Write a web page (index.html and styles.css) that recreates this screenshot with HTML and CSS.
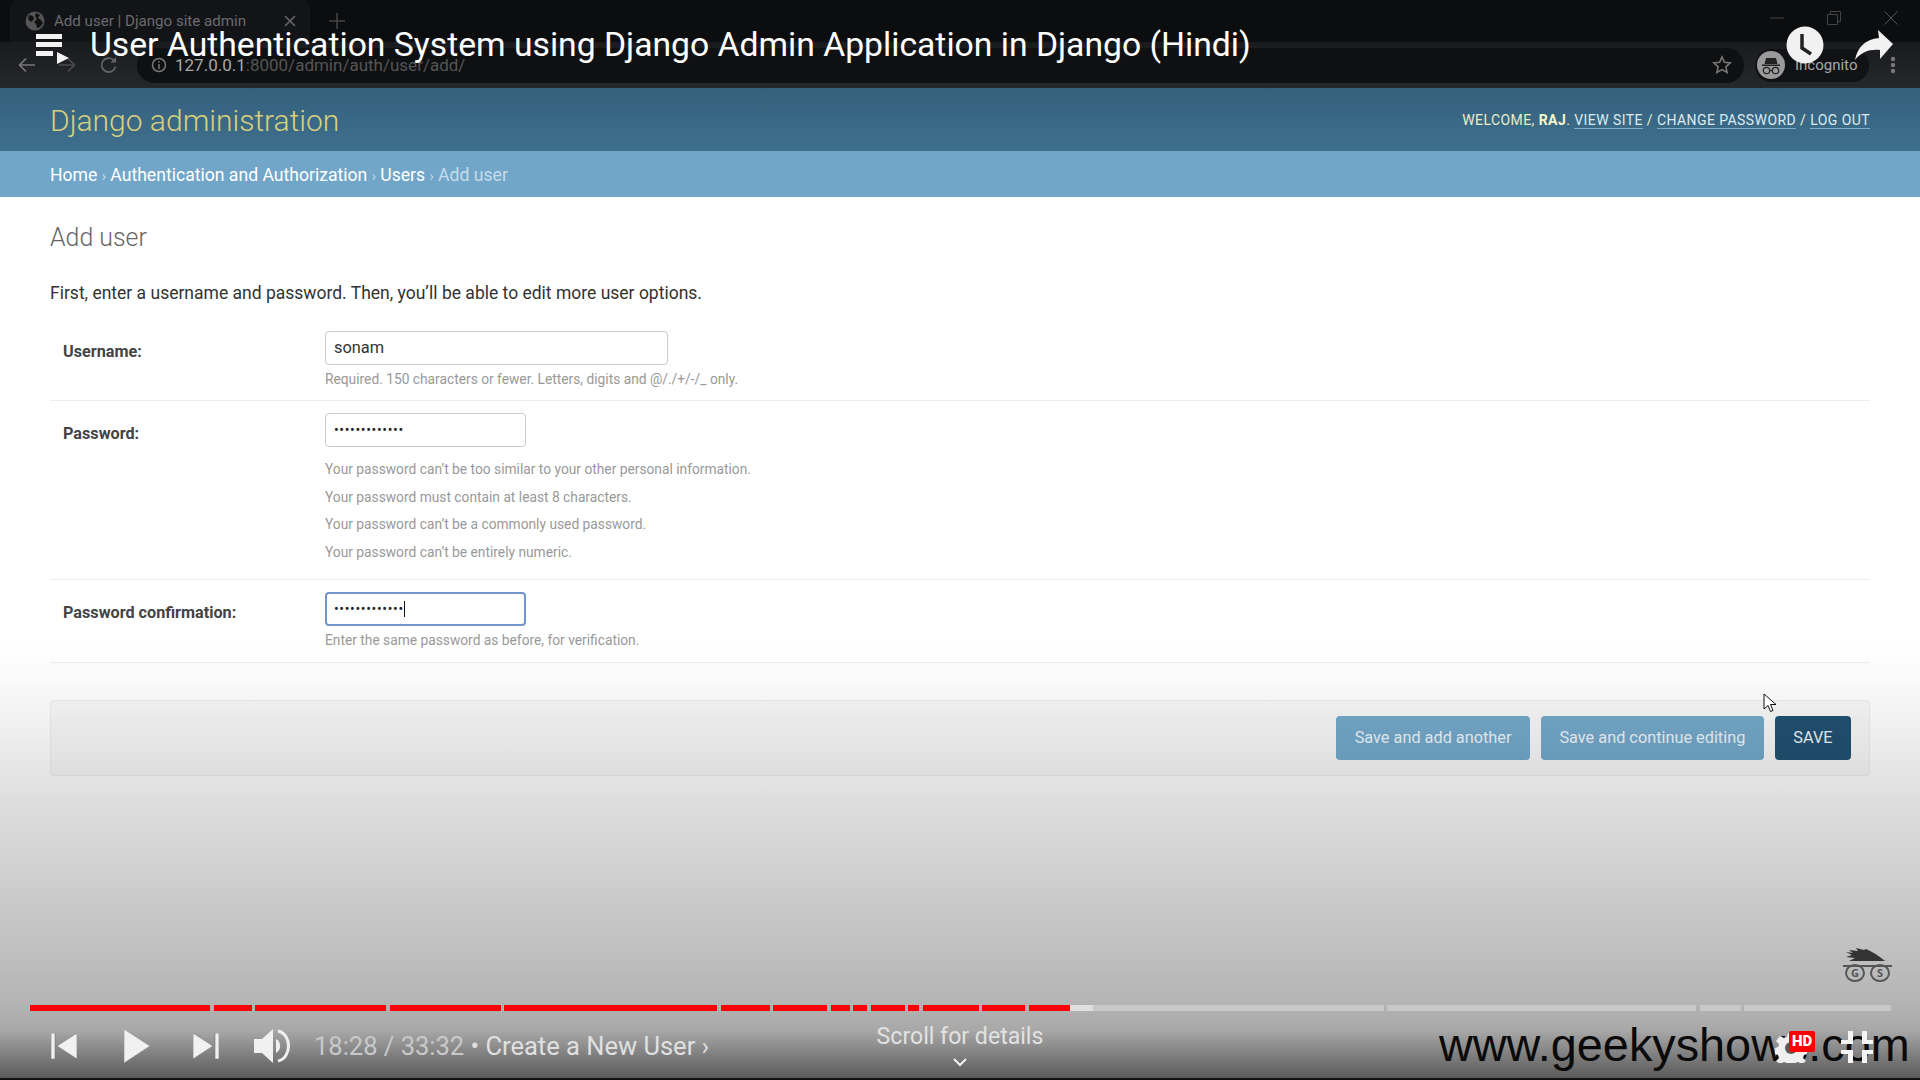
FILE: index.html
```html
<!DOCTYPE html><html>
<head>
<title>Add user | Django site admin</title>
<link rel="stylesheet" href="styles.css">
</head>
<body>
<div class='stage'>

<div class='tabstrip'>
  <div class='tab'>
    <svg class='globe' width='20' height='20' viewBox='0 0 20 20'><circle cx='10' cy='10' r='9.5' fill='#555'/><path d='M4 4l4 1 1 3-3 3-3-3zM11 2l4 2-2 3 3 2 2 3-3 4-3 1-1-4-2-2 3-3-2-3z' fill='#111'/></svg>
    <span class='tab-title'>Add user | Django site admin</span>
    <svg class='tab-close' width='12' height='12' viewBox='0 0 12 12'><path d='M1 1l10 10M11 1L1 11' stroke='#666' stroke-width='1.6'/></svg>
  </div>
  <svg class='tab-new' width='16' height='16' viewBox='0 0 16 16'><path d='M8 0v16M0 8h16' stroke='#444' stroke-width='1.6'/></svg>
  <div class='window-btns'>
    <svg width='14' height='14' viewBox='0 0 14 14'><path d='M0 7h14' stroke='#444' stroke-width='1'/></svg>
    <svg width='14' height='14' viewBox='0 0 14 14'><path d='M.5 3.500h10v10H.5zM3.500 3V.5h10v10H11' fill='none' stroke='#444'/></svg>
    <svg width='14' height='14' viewBox='0 0 14 14'><path d='M.5.5l13 13M13.500.5l-13 13' stroke='#555'/></svg>
  </div>
</div>

<div class='toolbar'>
  <svg class='nav-icon' width='18' height='16' viewBox='0 0 18 16'><path d='M17 8H2M8 1.500L1.500 8 8 14.500' fill='none' stroke='#777' stroke-width='1.700'/></svg>
  <svg class='nav-icon' width='18' height='16' viewBox='0 0 18 16'><path d='M1 8h15M10 1.500L16.500 8 10 14.500' fill='none' stroke='#4c4c4c' stroke-width='1.700'/></svg>
  <svg class='nav-icon' width='18' height='18' viewBox='0 0 18 18'><path d='M15.500 10.500A7 7 0 1 1 14 4.500' fill='none' stroke='#666' stroke-width='1.700'/><path d='M16 1v5.500h-5.500z' fill='#666'/></svg>
  <div class='omnibox'>
    <svg width='16' height='16' viewBox='0 0 16 16'><circle cx='8' cy='8' r='6.500' fill='none' stroke='#777' stroke-width='1.500'/><path d='M8 7v5M8 4v1.500' stroke='#777' stroke-width='1.500'/></svg>
    <span class='url'><span class='url-host'>127.0.0.1</span>:8000/admin/auth/user/add/</span>
    <svg class='star' width='20' height='20' viewBox='0 0 20 20'><path d='M10 2l2.400 5.300 5.800.6-4.300 3.900 1.200 5.700-5.100-2.900-5.100 2.900 1.200-5.700L1.800 7.900l5.800-.6z' fill='none' stroke='#777' stroke-width='1.600'/></svg>
  </div>
  <div class='incognito'>
    <svg width='28' height='28' viewBox='0 0 28 28'><circle cx='14' cy='14' r='14' fill='#9a9a9a'/><path d='M9 7h10l1.500 6h-13zM5 13.500h18V15H5z' fill='#222'/><circle cx='9.500' cy='19.500' r='3.200' fill='none' stroke='#222' stroke-width='1.200'/><circle cx='18.500' cy='19.500' r='3.200' fill='none' stroke='#222' stroke-width='1.200'/><path d='M12.500 19.500h3' stroke='#222' stroke-width='1.200'/></svg>
    <span class='incognito-label'>Incognito</span>
  </div>
  <svg class='kebab' width='6' height='18' viewBox='0 0 6 18'><circle cx='3' cy='3' r='2.200' fill='#777'/><circle cx='3' cy='9' r='2.200' fill='#777'/><circle cx='3' cy='15' r='2.200' fill='#777'/></svg>
</div>

<div class='header'>
  <div class='branding'>Django administration</div>
  <div class='usertools'>WELCOME, <strong>RAJ</strong>. <a>VIEW SITE</a> / <a>CHANGE PASSWORD</a> / <a>LOG OUT</a></div>
</div>

<div class='breadcrumbs'><a>Home</a> <span class='sep'>›</span> <a>Authentication and Authorization</a> <span class='sep'>›</span> <a>Users</a> <span class='sep'>›</span> Add user</div>

<div class='content'>
  <h1>Add user</h1>
  <p class='intro'>First, enter a username and password. Then, you’ll be able to edit more user options.</p>

  <div class='form-row row-user'>
    <label>Username:</label>
    <div class='field-box'>
      <div class='field field-wide'>sonam</div>
      <div class='help'>Required. 150 characters or fewer. Letters, digits and @/./+/-/_ only.</div>
    </div>
  </div>

  <div class='form-row row-pass'>
    <label>Password:</label>
    <div class='field-box'>
      <div class='field dots'>•••••••••••••</div>
      <ul class='help-list'>
        <li>Your password can’t be too similar to your other personal information.</li>
        <li>Your password must contain at least 8 characters.</li>
        <li>Your password can’t be a commonly used password.</li>
        <li>Your password can’t be entirely numeric.</li>
      </ul>
    </div>
  </div>

  <div class='form-row row-confirm'>
    <label>Password confirmation:</label>
    <div class='field-box'>
      <div class='field dots focused'><span class='caret'>•••••••••••••</span></div>
      <div class='help'>Enter the same password as before, for verification.</div>
    </div>
  </div>

  <div class='submit-row'>
    <a class='btn'>Save and add another</a>
    <a class='btn'>Save and continue editing</a>
    <a class='btn btn-default'>SAVE</a>
  </div>
</div>

<!-- video player laid over the recording -->
<div class='shade'></div>

<svg class='cursor' width='14' height='20' viewBox='0 0 14 20'><path d='M1 1v15l4-3.500 2.500 6 2.500-1-2.500-6H13z' fill='#fff' stroke='#111' stroke-width='1'/></svg>

<div class='player-top'>
  <svg width='34' height='36' viewBox='0 0 34 36'><path d='M0 4h26v5H0zM0 12h26v5H0zM0 21h17v5H0z' fill='#f2f2f2'/><path d='M21 22l12 6-12 6z' fill='#f2f2f2'/></svg>
  <div class='video-title'>User Authentication System using Django Admin Application in Django (Hindi)</div>
</div>

<svg class='clock' width='38' height='38' viewBox='0 0 38 38'><circle cx='19' cy='19' r='18.500' fill='#f1f1f1'/><path d='M16 8v14l9 6' fill='none' stroke='#222' stroke-width='3.500'/></svg>
<svg class='share' width='38' height='30' viewBox='0 0 38 30'><path d='M23 0l15 14-13 15V20C15 19 6 22 0 30 2 18 10 9 24 8z' fill='#f2f2f2'/></svg>
<svg class='logo' width='50' height='36' viewBox='0 0 50 36'><path d='M3 4l7 1-4-3 9 1-2-3 8 2 2-1c7 3 13 7 19 12H6l6-3-9-1 6-2z' fill='#333'/><path d='M0 18h49' stroke='#555' stroke-width='2'/><ellipse cx='12' cy='25' rx='9' ry='8' fill='none' stroke='#555' stroke-width='2'/><ellipse cx='37' cy='25' rx='9' ry='8' fill='none' stroke='#555' stroke-width='2'/><text x='12' y='29' class='logo-text'>G</text><text x='37' y='29' class='logo-text'>S</text></svg>

<div class='progress'>
  <i class='seg played' style='width:180px'></i><i class='seg played' style='width:38px'></i><i class='seg played' style='width:131px'></i><i class='seg played' style='width:111px'></i><i class='seg played' style='width:213px'></i><i class='seg played' style='width:49px'></i><i class='seg played' style='width:54px'></i><i class='seg played' style='width:19px'></i><i class='seg played' style='width:14px'></i><i class='seg played' style='width:34px'></i><i class='seg played' style='width:11px'></i><i class='seg played' style='width:56px'></i><i class='seg played' style='width:43px'></i><i class='seg played-end' style='width:355px'></i><i class='seg' style='width:309px'></i><i class='seg' style='width:41px'></i><i class='seg' style='width:147px'></i>
</div>

<div class='controls'>
  <svg width='26' height='26' viewBox='0 0 26 26'><path d='M0 0h4v26H0zM26 0v26L6 13z' fill='#f1f1f1' stroke='#777' stroke-width='.6'/></svg>
  <svg width='26' height='34' viewBox='0 0 26 34'><path d='M0 0l26 17L0 34z' fill='#f1f1f1' stroke='#888' stroke-width='.6'/></svg>
  <svg width='26' height='26' viewBox='0 0 26 26'><path d='M0 0l20 13L0 26zM22 0h4v26h-4z' fill='#f1f1f1' stroke='#777' stroke-width='.6'/></svg>
  <svg width='37' height='36' viewBox='0 0 37 36'><path d='M0 11h8l11-10v34L8 25H0z' fill='#f1f1f1'/><path d='M22 11a8 8 0 0 1 0 14z' fill='#f1f1f1'/><path d='M24 3c14 3 14 27 0 30' fill='none' stroke='#f1f1f1' stroke-width='3'/></svg>
  <div class='time'>18:28 / 33:32 <span class='chapter'>• Create a New User ›</span></div>
</div>

<div class='scroll-hint'>
  <span>Scroll for details</span>
  <svg width='14' height='9' viewBox='0 0 14 9'><path d='M1 1l6 6 6-6' fill='none' stroke='#f1f1f1' stroke-width='2'/></svg>
</div>

<div class='watermark'>www.geekyshows.com</div>

<svg class='gear' width='32' height='30' viewBox='0 0 32 30'><path d='M13 0h6l1 4 3 1 4-2 4 5-3 3 1 3 3 1v6l-3 1-1 3 3 3-4 3-4-2-3 1-1 3h-6l-1-3-3-1-4 2-4-3 3-3-1-3-3-1v-6l3-1 1-3-3-3 4-5 4 2 3-1z' fill='#efefef'/><circle cx='16' cy='15' r='6' fill='#5a5a5a'/></svg>
<div class='hd'>HD</div>
<svg class='fullscreen' width='32' height='32' viewBox='0 0 32 32'><path d='M7 0h5v13H0V9h7zM21 0h5v9h6v4H21zM0 19h12v13H7V23H0zM21 19h11v4h-6v9h-5z' fill='#f4f4f4'/></svg>

<div class='bottom-edge'></div>
</div>
</body>
</html>
```

FILE: styles.css
```css
html, body { margin: 0; padding: 0; background: #000; }
body { font-family: Roboto, "Liberation Sans", sans-serif; }

.stage { position: relative; width: 1920px; height: 1080px; overflow: hidden; background: #fff; }

/* browser chrome */
.tabstrip { height: 42px; display: flex; align-items: flex-end; background: #0c0d0f; }
.tab { width: 300px; height: 42px; margin-left: 10px; display: flex; align-items: center; box-sizing: border-box; padding: 0 14px 0 15px; background: #131417; border-radius: 8px 8px 0 0; }
.tab-title { margin-left: 9px; font-size: 15.100px; color: #6b6b6b; white-space: nowrap; }
.tab-close { margin-left: auto; }
.tab-new { margin: 0 0 13px 19px; }
.window-btns { margin-left: auto; display: flex; gap: 43px; padding: 0 22px 17px 0; }

.toolbar { height: 46px; display: flex; align-items: center; box-sizing: border-box; padding: 0 0 0 18px; background: linear-gradient(#1a1b1e, #26272b); }
.nav-icon { margin-right: 22px; }
.toolbar .nav-icon:nth-child(3) { margin: 0 19px 0 2px; }
.omnibox { width: 1607px; height: 35px; display: flex; align-items: center; box-sizing: border-box; padding: 0 12px 0 14px; background: #0f1012; border-radius: 18px; }
.url { margin-left: 8px; font-size: 17px; color: #555; }
.url-host { color: #a8a8a8; }
.star { margin-left: auto; }
.incognito { width: 114px; height: 33px; margin-left: 11px; display: flex; align-items: center; box-sizing: border-box; padding-left: 2px; background: #111215; border-radius: 17px; }
.incognito-label { margin-left: 10px; font-size: 15px; color: #a8a8a8; }
.kebab { margin-left: 21px; }

/* django admin */
.header { height: 63px; display: flex; align-items: center; justify-content: space-between; box-sizing: border-box; padding: 0 50px; background: linear-gradient(#35617c, #3e6f8d); }
.branding { padding-top: 2px; font-size: 30px; font-weight: 300; color: #d8cf7e; }
.usertools { font-size: 14px; color: #e8ecc8; letter-spacing: .43px; }
.usertools strong { font-weight: 700; color: #f5f5cc; }
.usertools a { color: #dcebf2; border-bottom: 1px solid #79aec8; }

.breadcrumbs { height: 46px; line-height: 48px; box-sizing: border-box; padding: 0 50px; background: #72a6c8; font-size: 17.600px; color: #c4dcec; }
.breadcrumbs a { color: #fff; }
.breadcrumbs .sep { font-size: 14px; }

.content { padding: 0 50px; color: #333; }
.content h1 { margin: 0; padding-top: 27px; font-size: 24.900px; line-height: 28px; font-weight: 300; color: #666; }
.intro { margin: 29px 0 0; font-size: 17.500px; line-height: 24px; color: #333; }

.form-row { display: flex; border-bottom: 1px solid #eee; }
.form-row label { width: 275px; box-sizing: border-box; padding: 11px 0 0 13px; font-size: 16.200px; line-height: 20px; font-weight: 700; color: #444; }
.row-user { margin-top: 26px; height: 69px; }
.row-pass { height: 166px; padding-top: 12px; }
.row-confirm { height: 70px; padding-top: 12px; }

.field { width: 201px; height: 34px; box-sizing: border-box; padding: 0 8px; border: 1px solid #ccc; border-radius: 4px; background: #fff; font-size: 16.400px; line-height: 32px; color: #333; }
.field-wide { width: 343px; }
.dots { font-size: 14px; letter-spacing: .65px; color: #222; }
.focused { border: 2px solid #7396c9; padding: 0 7px; line-height: 30px; }
.caret { border-right: 1.500px solid #111; }

.help { margin-top: 6px; font-size: 13.780px; line-height: 16px; color: #999; }
.help-list { margin: 9px 0 0; padding: 0; list-style: none; }
.help-list li { height: 27.600px; font-size: 13.780px; line-height: 27.600px; color: #999; }

.submit-row { margin-top: 37px; height: 76px; display: flex; align-items: center; justify-content: flex-end; gap: 11px; box-sizing: border-box; padding-right: 18px; border: 1px solid #eee; border-radius: 4px; background: #f8f8f8; }
.btn { height: 44px; line-height: 44px; padding: 0 18.500px; border-radius: 4px; background: #74a9cb; font-size: 16.300px; color: #eef5fa; white-space: nowrap; }
.btn-default { background: #215172; }

/* video player overlay */
.shade { position: absolute; left: 0; right: 0; top: 0; bottom: 0; background: linear-gradient(rgba(0,0,0,0) 640px, rgba(0,0,0,.02) 680px, rgba(0,0,0,.13) 800px, rgba(0,0,0,.23) 930px, rgba(0,0,0,.29) 1000px, rgba(0,0,0,.34) 1030px, rgba(0,0,0,.5) 1055px, rgba(0,0,0,.66) 1080px); }
.cursor { position: absolute; left: 1763px; top: 693px; }

.player-top { position: absolute; left: 36px; top: 30px; display: flex; align-items: flex-start; gap: 20px; }
.video-title { margin-top: -5px; font-size: 33.700px; line-height: 40px; color: #fff; white-space: nowrap; }
.clock { position: absolute; left: 1786px; top: 26px; }
.share { position: absolute; left: 1855px; top: 30px; }
.logo { position: absolute; left: 1843px; top: 948px; }
.logo-text { font-family: "Open Sans", sans-serif; font-size: 11px; font-weight: 700; fill: #555; text-anchor: middle; }

.progress { position: absolute; left: 30px; top: 1005px; display: flex; gap: 3.500px; }
.seg { display: block; height: 6px; background: #c8c8c8; }
.played { background: #f00; }
.played-end { background: linear-gradient(90deg, #f00 41px, #e0e0e0 41px, #e0e0e0 64px, #c8c8c8 64px); }

.controls { position: absolute; left: 51px; top: 1028px; height: 36px; display: flex; align-items: center; gap: 47px; }
.controls svg:nth-child(3) { margin-left: -4px; }
.controls svg:nth-child(4) { margin-left: -12px; }
.time { margin-left: -24px; font-size: 25.500px; color: #c9c9c9; white-space: nowrap; }
.chapter { color: #e0e0e0; }

.scroll-hint { position: absolute; left: 810px; top: 1021px; width: 300px; display: flex; flex-direction: column; align-items: center; gap: 5px; font-size: 23.100px; line-height: 32px; color: #e2e2e2; }
.watermark { position: absolute; left: 1439px; top: 1018px; font-family: "Liberation Sans", sans-serif; font-size: 46.800px; line-height: 54px; color: #0a0a0a; white-space: nowrap; }
.gear { position: absolute; left: 1775px; top: 1033px; }
.hd { position: absolute; left: 1789px; top: 1031px; width: 26px; height: 21px; border-radius: 2px; background: #f00; font-size: 15px; font-weight: 900; line-height: 21px; text-align: center; color: #fff; }
.fullscreen { position: absolute; left: 1841px; top: 1031px; }
.bottom-edge { position: absolute; left: 0; right: 0; bottom: 0; height: 2px; background: #111; }
```
